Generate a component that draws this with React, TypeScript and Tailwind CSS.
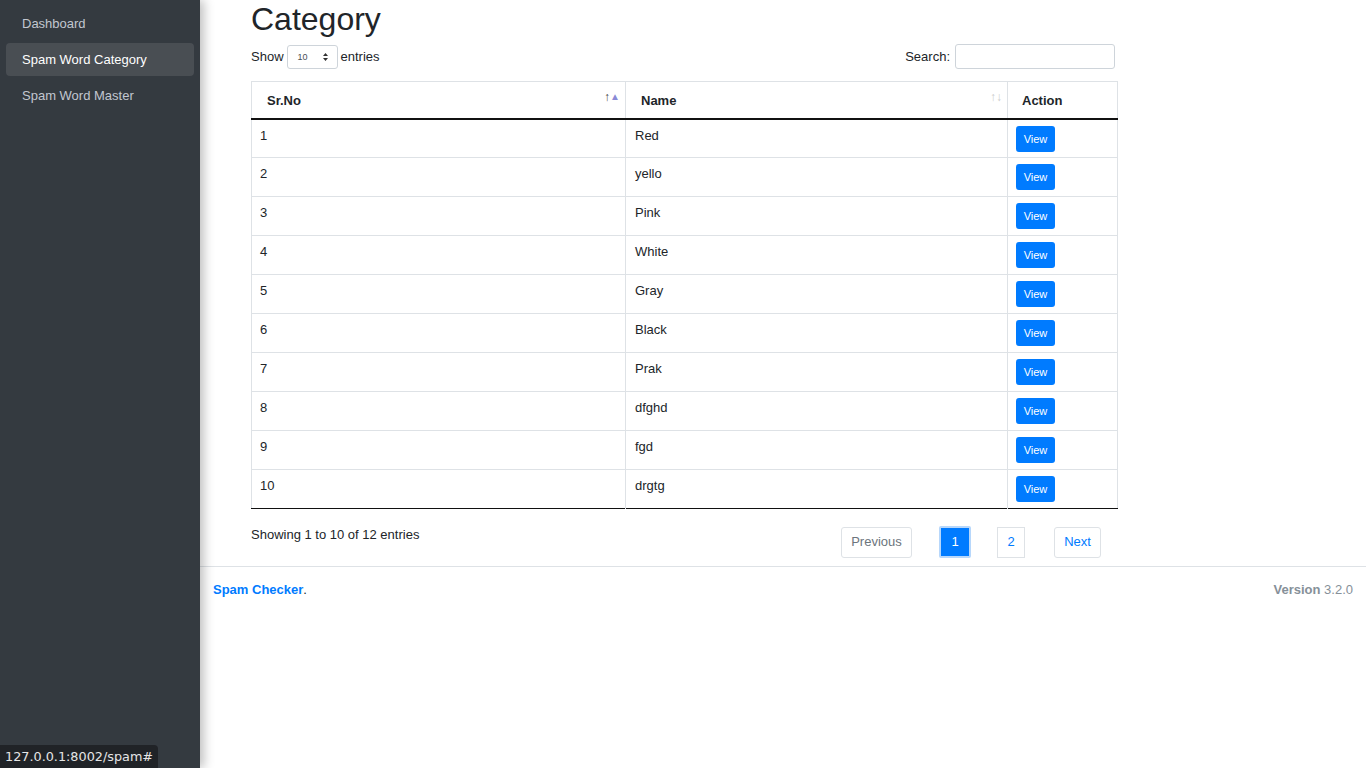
import React from 'react';

const rows = ['Red', 'yello', 'Pink', 'White', 'Gray', 'Black', 'Prak', 'dfghd', 'fgd', 'drgtg'];

const SortIcon: React.FC<{ active?: boolean }> = ({ active }) => (
  <span className="absolute right-[5px] top-[9px] flex items-start text-[12px] leading-none">
    <span className={active ? 'text-[#444]' : 'text-[#ccc]'}>↑</span>
    <span className={active ? 'text-[#8a8ad6] text-[10px] mt-[1px]' : 'text-[#ccc] text-[12px]'}>{active ? '▲' : '↓'}</span>
  </span>
);

export default function App() {
  return (
    <div className="flex h-screen w-full bg-white text-[13px] leading-[20px] text-[#212529]" style={{ fontFamily: '"Liberation Sans", Arial, sans-serif' }}>
      {/* Sidebar */}
      <aside className="relative z-10 w-[200px] shrink-0 bg-[#343a40] shadow-[4px_0_10px_rgba(0,0,0,0.25)]">
        <nav className="flex flex-col gap-[3px] px-[6px] pt-[7px]">
          <a className="block rounded px-4 py-[8px] leading-[17px] text-[#c2c7d0]">Dashboard</a>
          <a className="block rounded bg-[#494e53] px-4 py-[8px] leading-[17px] text-white">Spam Word Category</a>
          <a className="block rounded px-4 py-[8px] leading-[17px] text-[#c2c7d0]">Spam Word Master</a>
        </nav>
        <div
          className="absolute bottom-0 left-0 h-[23px] rounded-tr-[4px] bg-[#202327] px-[5px] pt-[3px] text-[12.8px] leading-[17px] text-[#e6e6e6]"
          style={{ fontFamily: '"DejaVu Sans", sans-serif' }}
        >
          127.0.0.1:8002/spam#
        </div>
      </aside>

      {/* Main */}
      <main className="flex-1">
        <div className="box-content w-[867px] pl-[51px]">
          <h1 className="pt-[1px] text-[32px] leading-[36px] text-[#212529]">Category</h1>

          <div className="mt-[7px] flex items-center justify-between">
            <div className="flex items-center gap-[3px]">
              <span>Show</span>
              <div className="flex h-[24px] w-[51px] items-center justify-between rounded-[3px] border border-[#ced4da] pl-[10px] pr-[8px] text-[9px] text-[#495057]">
                <span>10</span>
                <svg width="7" height="10" viewBox="0 0 7 10">
                  <path d="M3.5 1 L6 4 H1 Z M3.5 9 L6 6 H1 Z" fill="#333" />
                </svg>
              </div>
              <span>entries</span>
            </div>
            <div className="flex items-center gap-[5px] pr-[3px]">
              <span>Search:</span>
              <div className="h-[25px] w-[160px] rounded-[3px] border border-[#ced4da]" />
            </div>
          </div>

          <table className="mt-[12px] w-full border-collapse border-x border-t border-[#dee2e6]">
            <thead>
              <tr className="h-[37px] border-b-2 border-b-[#111]">
                <th className="relative w-[374px] border-r border-[#dee2e6] pl-[15px] pt-[2px] text-left font-bold">
                  Sr.No
                  <SortIcon active />
                </th>
                <th className="relative w-[382px] border-r border-[#dee2e6] pl-[15px] pt-[2px] text-left font-bold">
                  Name
                  <SortIcon />
                </th>
                <th className="pl-[14px] pt-[2px] text-left font-bold">Action</th>
              </tr>
            </thead>
            <tbody>
              {rows.map((name, i) => (
                <tr key={i} className={`h-[39px] ${i === rows.length - 1 ? 'border-b border-b-[#111]' : 'border-b border-[#dee2e6]'}`}>
                  <td className="border-r border-[#dee2e6] pl-[8px] pt-[8px] align-top leading-[15px]">{i + 1}</td>
                  <td className="border-r border-[#dee2e6] pl-[9px] pt-[8px] align-top leading-[15px]">{name}</td>
                  <td className="pl-[8px] pt-[6px] align-top">
                    <button className="h-[26px] w-[39px] rounded-[3px] bg-[#007bff] text-[11px] text-white">View</button>
                  </td>
                </tr>
              ))}
            </tbody>
          </table>

          <div className="flex justify-between">
            <div className="pt-[16px]">Showing 1 to 10 of 12 entries</div>
            <div className="mr-[17px] mt-[17px] flex items-center text-[13px]">
              <span className="flex h-[31px] w-[71px] items-center justify-center rounded-[3px] border border-[#dee2e6] text-[#6c757d]">Previous</span>
              <span className="ml-[27px] flex h-[32px] w-[32px] items-center justify-center rounded-[2px] border-2 border-[#b7d7fb] bg-[#007bff] text-white">1</span>
              <span className="ml-[26px] flex h-[31px] w-[28px] items-center justify-center border border-[#dee2e6] text-[#007bff]">2</span>
              <span className="ml-[29px] flex h-[31px] w-[47px] items-center justify-center rounded-[3px] border border-[#dee2e6] text-[#007bff]">Next</span>
            </div>
          </div>
        </div>

        <footer className="mt-[8px] flex items-center justify-between border-t border-[#dee2e6] px-[13px] pt-[13px] text-[13px]">
          <span className="font-bold text-[#007bff]">
            Spam Checker<span className="font-normal text-[#212529]">.</span>
          </span>
          <span className="text-[#869099]">
            <b>Version</b> 3.2.0
          </span>
        </footer>
      </main>
    </div>
  );
}
